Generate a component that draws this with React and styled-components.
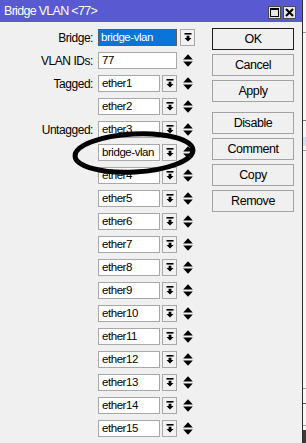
import React from 'react'
import styled, { createGlobalStyle, css } from 'styled-components'

const GlobalStyle = createGlobalStyle`
  html, body {
    margin: 0;
    padding: 0;
    background: #f0f0f0;
  }
  body {
    font-family: "Liberation Sans", Arial, sans-serif;
    color: #000;
  }
`

const Screen = styled.div`
  display: flex;
  width: 306px;
  height: 443px;
  overflow: hidden;
`

const Window = styled.div`
  position: relative;
  flex: none;
  width: 302px;
  background: #f0f0f0;
  border-right: 1px solid #2e2e2e;
  display: flex;
  flex-direction: column;
`

const TitleBar = styled.div`
  height: 22px;
  flex: none;
  background: #5959d2;
  color: #fff;
  display: flex;
  align-items: center;
  justify-content: space-between;
  padding: 0 6px 0 4px;
  font-size: 12.5px;
  letter-spacing: -0.7px;
`

const TitleButtons = styled.div`
  display: flex;
  gap: 2px;
  margin-top: 3px;
`

const TitleButton = styled.div`
  width: 13px;
  height: 13px;
  box-sizing: border-box;
  background: #e6e6e6;
  border: 1px solid #4a4a4a;
  display: flex;
  align-items: center;
  justify-content: center;
`

const Body = styled.div`
  display: flex;
  padding-top: 6px;
`

const Form = styled.div`
  width: 212px;
  display: flex;
  flex-direction: column;
  gap: 6px;
  padding-top: 1px;
`

const Row = styled.div`
  display: grid;
  grid-template-columns: 93px auto;
  column-gap: 5px;
  align-items: center;
  height: 17px;
`

const Label = styled.span`
  text-align: right;
  font-size: 12px;
  letter-spacing: -0.45px;
`

const Field = styled.div`
  display: flex;
  align-items: center;
`

const Input = styled.div`
  width: ${({ w }) => w}px;
  height: 17px;
  box-sizing: border-box;
  border: 1px solid #a8a8a8;
  background: #fff;
  padding: 0 3px;
  font-size: 11.5px;
  letter-spacing: -0.45px;
  line-height: 15px;
  white-space: nowrap;
  overflow: hidden;
  ${({ selected }) => selected && css`
    border-color: #5d5d5d;
    background: #0a74d8;
    color: #fff;
    padding-left: 2px;
  `}
`

const DropButton = styled.div`
  width: 15px;
  height: 17px;
  box-sizing: border-box;
  margin-left: ${({ gap }) => gap}px;
  border: 1px solid #a8a8a8;
  background: #f2f2f2;
  display: flex;
  align-items: center;
  justify-content: center;
`

const Spinner = styled.div`
  width: 10px;
  height: 13px;
  margin-left: 6px;
  display: flex;
`

const ButtonColumn = styled.div`
  width: 82px;
  display: flex;
  flex-direction: column;
  gap: 4px;
`

const Button = styled.div`
  height: 22px;
  box-sizing: border-box;
  border: 1px solid #a3a3a3;
  background: #f0f0f0;
  display: flex;
  align-items: center;
  justify-content: center;
  font-size: 12.5px;
  letter-spacing: -0.45px;
  ${({ primary }) => primary && css`
    border-color: #1c1c1c;
  `}
  ${({ spaced }) => spaced && css`
    margin-top: 6px;
  `}
`

const Annotation = styled.svg`
  position: absolute;
  left: 0;
  top: 0;
  pointer-events: none;
`

const Backdrop = styled.div`
  flex: 1;
  background:
    linear-gradient(#3a3a3a, #3a3a3a) 0 430px / 100% 13px no-repeat,
    linear-gradient(#cfe0f3, #cfe0f3) 0 137px / 100% 9px no-repeat,
    linear-gradient(#9a9a9a, #9a9a9a) 0 32px / 100% 1px no-repeat,
    linear-gradient(#7a7a7a, #7a7a7a) 0 120px / 100% 1px no-repeat,
    linear-gradient(#9a9a9a, #9a9a9a) 0 150px / 100% 1px no-repeat,
    linear-gradient(#9a9a9a, #9a9a9a) 0 388px / 100% 1px no-repeat,
    linear-gradient(#555, #555) 0 403px / 100% 1px no-repeat,
    linear-gradient(#9a9a9a, #9a9a9a) 0 425px / 100% 1px no-repeat,
    #f7f7f7;
`

const DropIcon = () => (
  <svg width="8" height="9" viewBox="0 0 8 9">
    <rect x="0.5" y="0" width="7" height="1.6" fill="#000" />
    <path d="M2.6 2.8h2.8v2.2h2.1L4 8.6 0.5 5h2.1z" fill="#000" />
  </svg>
)

const SpinIcon = () => (
  <svg width="10" height="13" viewBox="0 0 10 13">
    <path d="M5 0.3L9.8 5.6H0.2z" fill="#000" />
    <path d="M0.2 7.4h9.6L5 12.7z" fill="#000" />
  </svg>
)

const ports = Array.from({ length: 15 }, (_, i) => `ether${i + 1}`)

const portRows = [
  { label: 'Tagged:', value: 'ether1' },
  { label: '', value: 'ether2' },
  { label: 'Untagged:', value: 'ether3' },
  { label: '', value: 'bridge-vlan' },
  ...ports.slice(3).map(value => ({ label: '', value })),
]

const actions = ['OK', 'Cancel', 'Apply', 'Disable', 'Comment', 'Copy', 'Remove']

const App = () => (
  <>
    <GlobalStyle />
    <Screen>
      <Window>
        <TitleBar>
          <span>Bridge VLAN &lt;77&gt;</span>
          <TitleButtons>
            <TitleButton>
              <svg width="9" height="9" viewBox="0 0 9 9">
                <rect x="0.5" y="0.5" width="8" height="8" fill="none" stroke="#000" />
                <rect x="0" y="0" width="9" height="2" fill="#000" />
              </svg>
            </TitleButton>
            <TitleButton>
              <svg width="9" height="9" viewBox="0 0 9 9">
                <path d="M1 1L8 8M8 1L1 8" stroke="#000" strokeWidth="2" />
              </svg>
            </TitleButton>
          </TitleButtons>
        </TitleBar>
        <Body>
          <Form>
            <Row>
              <Label>Bridge:</Label>
              <Field>
                <Input w={79} selected>bridge-vlan</Input>
                <DropButton gap={3}><DropIcon /></DropButton>
              </Field>
            </Row>
            <Row>
              <Label>VLAN IDs:</Label>
              <Field>
                <Input w={79}>77</Input>
                <Spinner><SpinIcon /></Spinner>
              </Field>
            </Row>
            {portRows.map(({ label, value }) => (
              <Row key={value}>
                <Label>{label}</Label>
                <Field>
                  <Input w={62}>{value}</Input>
                  <DropButton gap={2}><DropIcon /></DropButton>
                  <Spinner><SpinIcon /></Spinner>
                </Field>
              </Row>
            ))}
          </Form>
          <ButtonColumn>
            {actions.map(name => (
              <Button key={name} primary={name === 'OK'} spaced={name === 'Disable'}>
                {name}
              </Button>
            ))}
          </ButtonColumn>
        </Body>
        <Annotation width="302" height="443">
          <ellipse
            cx="134"
            cy="153"
            rx="59"
            ry="19"
            fill="none"
            stroke="#000"
            strokeWidth="5"
            transform="rotate(-3 134 153)"
          />
        </Annotation>
      </Window>
      <Backdrop />
    </Screen>
  </>
)

export default App
